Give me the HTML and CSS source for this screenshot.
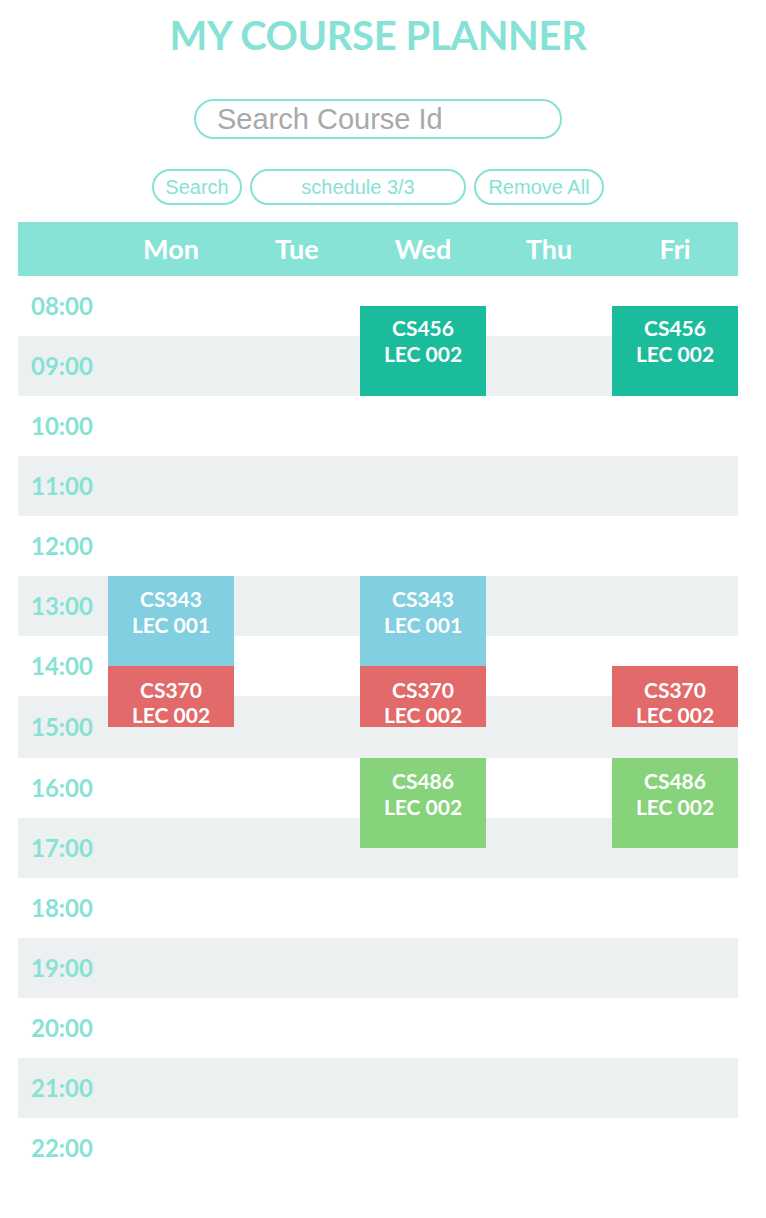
FILE: index.html
```html
<!DOCTYPE html>
<html>
<head>
<meta charset="utf-8">
<title>My Course Planner</title>
<link rel="stylesheet" href="styles.css">
</head>
<body>
<div class="page">
  <h1 class="title">MY COURSE PLANNER</h1>
  <div class="search-row"><input class="search" type="text" placeholder="Search Course Id"></div>
  <div class="actions">
    <button class="btn btn-search">Search</button>
    <button class="btn btn-schedule">schedule 3/3</button>
    <button class="btn btn-remove">Remove All</button>
  </div>
  <div class="timetable">
    <div class="head">
      <div class="head-cell"></div>
      <div class="head-cell">Mon</div>
      <div class="head-cell">Tue</div>
      <div class="head-cell">Wed</div>
      <div class="head-cell">Thu</div>
      <div class="head-cell">Fri</div>
    </div>
    <div class="grid">
      <div class="row r08"><span class="time">08:00</span></div>
      <div class="row r09 alt"><span class="time">09:00</span></div>
      <div class="row r10"><span class="time">10:00</span></div>
      <div class="row r11 alt"><span class="time">11:00</span></div>
      <div class="row r12"><span class="time">12:00</span></div>
      <div class="row r13 alt"><span class="time">13:00</span></div>
      <div class="row r14"><span class="time">14:00</span></div>
      <div class="row r15 alt"><span class="time">15:00</span></div>
      <div class="row r16"><span class="time">16:00</span></div>
      <div class="row r17 alt"><span class="time">17:00</span></div>
      <div class="row r18"><span class="time">18:00</span></div>
      <div class="row r19 alt"><span class="time">19:00</span></div>
      <div class="row r20"><span class="time">20:00</span></div>
      <div class="row r21 alt"><span class="time">21:00</span></div>
      <div class="row r22"><span class="time">22:00</span></div>

      <div class="course cs456 wed"><span>CS456</span><span>LEC 002</span></div>
      <div class="course cs456 fri"><span>CS456</span><span>LEC 002</span></div>
      <div class="course cs343 mon"><span>CS343</span><span>LEC 001</span></div>
      <div class="course cs343 wed"><span>CS343</span><span>LEC 001</span></div>
      <div class="course cs370 mon"><span>CS370</span><span>LEC 002</span></div>
      <div class="course cs370 wed"><span>CS370</span><span>LEC 002</span></div>
      <div class="course cs370 fri"><span>CS370</span><span>LEC 002</span></div>
      <div class="course cs486 wed"><span>CS486</span><span>LEC 002</span></div>
      <div class="course cs486 fri"><span>CS486</span><span>LEC 002</span></div>
    </div>
  </div>
</div>
</body>
</html>
```

FILE: styles.css
```css
html, body {
  margin: 0;
  padding: 0;
  background: #ffffff;
}

.page {
  width: 720px;
  margin-left: 18px;
  display: flex;
  flex-direction: column;
  align-items: center;
  font-family: Lato, "Liberation Sans", sans-serif;
}

.title {
  margin: 9px 0 0 0;
  font-family: Lato, "Liberation Sans", sans-serif;
  font-weight: 700;
  font-size: 40px;
  line-height: 52px;
  color: #86e2d5;
  letter-spacing: -0.4px;
}

.search-row {
  margin-top: 38px;
  display: flex;
  justify-content: center;
}

.search {
  box-sizing: border-box;
  width: 368px;
  height: 40px;
  border: 2px solid #86e2d5;
  border-radius: 20px;
  padding: 0 0 0 21px;
  font-family: "Liberation Sans", Arial, sans-serif;
  font-size: 29px;
  color: #555;
  outline: none;
  background: #fff;
}

.search::placeholder {
  color: #a9a9a9;
}

.actions {
  margin-top: 30px;
  display: flex;
  gap: 8px;
}

.btn {
  box-sizing: border-box;
  height: 36px;
  border: 2px solid #86e2d5;
  border-radius: 18px;
  background: #fff;
  color: #86e2d5;
  font-family: "Liberation Sans", Arial, sans-serif;
  font-size: 20px;
  padding: 0;
  cursor: pointer;
}

.btn-search { width: 90px; }
.btn-schedule { width: 216px; }
.btn-remove { width: 130px; }

.timetable {
  margin-top: 17px;
  width: 720px;
}

.head {
  display: grid;
  grid-template-columns: 90px repeat(5, 126px);
  height: 54px;
  background: #87e3d6;
}

.head-cell {
  display: flex;
  align-items: center;
  justify-content: center;
  color: #ffffff;
  font-weight: 700;
  font-size: 27px;
  padding-bottom: 2px;
}

.grid {
  display: grid;
  grid-template-columns: 90px repeat(5, 126px);
  grid-template-rows: repeat(14, 30px) 31px 31px repeat(14, 30px);
}

.row {
  grid-column: 1 / -1;
  display: flex;
  align-items: center;
  padding-left: 13px;
  background: #ffffff;
}

.row.alt { background: #ecf0f1; }

.time {
  color: #86e2d5;
  font-weight: 700;
  font-size: 24px;
  margin-top: -2px;
}

.r08 { grid-row: 1 / 3; }
.r09 { grid-row: 3 / 5; }
.r10 { grid-row: 5 / 7; }
.r11 { grid-row: 7 / 9; }
.r12 { grid-row: 9 / 11; }
.r13 { grid-row: 11 / 13; }
.r14 { grid-row: 13 / 15; }
.r15 { grid-row: 15 / 17; }
.r16 { grid-row: 17 / 19; }
.r17 { grid-row: 19 / 21; }
.r18 { grid-row: 21 / 23; }
.r19 { grid-row: 23 / 25; }
.r20 { grid-row: 25 / 27; }
.r21 { grid-row: 27 / 29; }
.r22 { grid-row: 29 / 31; }

.course {
  display: flex;
  flex-direction: column;
  align-items: center;
  padding-top: 10px;
  color: #ffffff;
  font-weight: 700;
  font-size: 21px;
  line-height: 26px;
  box-sizing: border-box;
}

.mon { grid-column: 2; }
.wed { grid-column: 4; }
.fri { grid-column: 6; }

.cs456 { grid-row: 2 / 5; background: #1abc9c; padding-top: 9px; }
.cs343 { grid-row: 11 / 14; background: #81cfe0; }
.cs370 { grid-row: 14 / 16; background: #e26a6a; padding-top: 11px; line-height: 25px; }
.cs486 { grid-row: 17 / 20; background: #87d37c; }
```
